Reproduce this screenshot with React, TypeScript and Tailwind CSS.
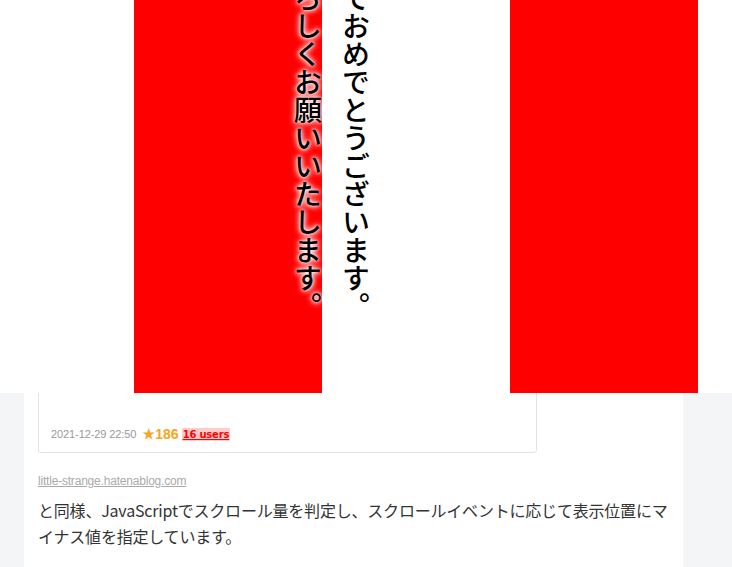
export default function App() {
  return (
    <div className="relative min-h-[567px] bg-[#f4f5f7] overflow-hidden font-['Liberation_Sans','Noto_Sans_CJK_JP',sans-serif]">
      {/* article column */}
      <div className="ml-[24px] w-[659px] bg-white px-[14px] pt-[300px] pb-[40px]">
        {/* embedded blog card, its top is under the banner */}
        <div className="w-[499px] h-[153px] flex flex-col justify-end rounded-[3px] border border-[#e3e3e3] px-[12px] pb-[10px]">
          <div className="flex items-center h-[16px] text-[11px] leading-[16px]">
            <span className="text-[#999] tracking-[-0.1px]">2021-12-29 22:50</span>
            <span className="ml-[6px] text-[#f5a623] text-[13px]">★</span>
            <span className="text-[#f5a623] text-[14px] font-bold">186</span>
            <span className="ml-[3px] bg-[#ffcccc] text-[#ff0000] font-bold font-['DejaVu_Sans',sans-serif] text-[10px] leading-[13px] px-[1px] underline tracking-[-0.2px]">
              16 users
            </span>
          </div>
        </div>
        <a className="block mt-[19px] text-[12px] leading-[18px] text-[#aaa] underline tracking-[-0.2px]">
          little-strange.hatenablog.com
        </a>
        <p className="mt-[7px] text-[16px] leading-[26px] tracking-[-0.2px] text-[#333] font-['Noto_Sans_CJK_JP',sans-serif]">
          と同様、JavaScriptでスクロール量を判定し、スクロールイベントに応じて表示位置にマイナス値を指定しています。
        </p>
      </div>

      {/* fixed new-year banner over the page */}
      <div className="absolute top-0 left-0 w-full h-[393px] bg-white overflow-hidden">
        <div className="flex ml-[134px] h-full">
          <div className="w-[188px] bg-[#ff0000]" />
          <div className="w-[188px] bg-white" />
          <div className="w-[188px] bg-[#ff0000]" />
        </div>
        <div className="absolute left-[284px] top-[-128px] [writing-mode:vertical-rl] text-[28px] leading-[48px] font-medium text-black font-['Noto_Sans_CJK_JP',serif] [text-shadow:0_0_3px_#fff,0_0_6px_#fff,0_0_6px_#fff]">
          <p>あけましておめでとうございます。</p>
          <p>本年もよろしくお願いいたします。</p>
        </div>
      </div>
    </div>
  );
}
